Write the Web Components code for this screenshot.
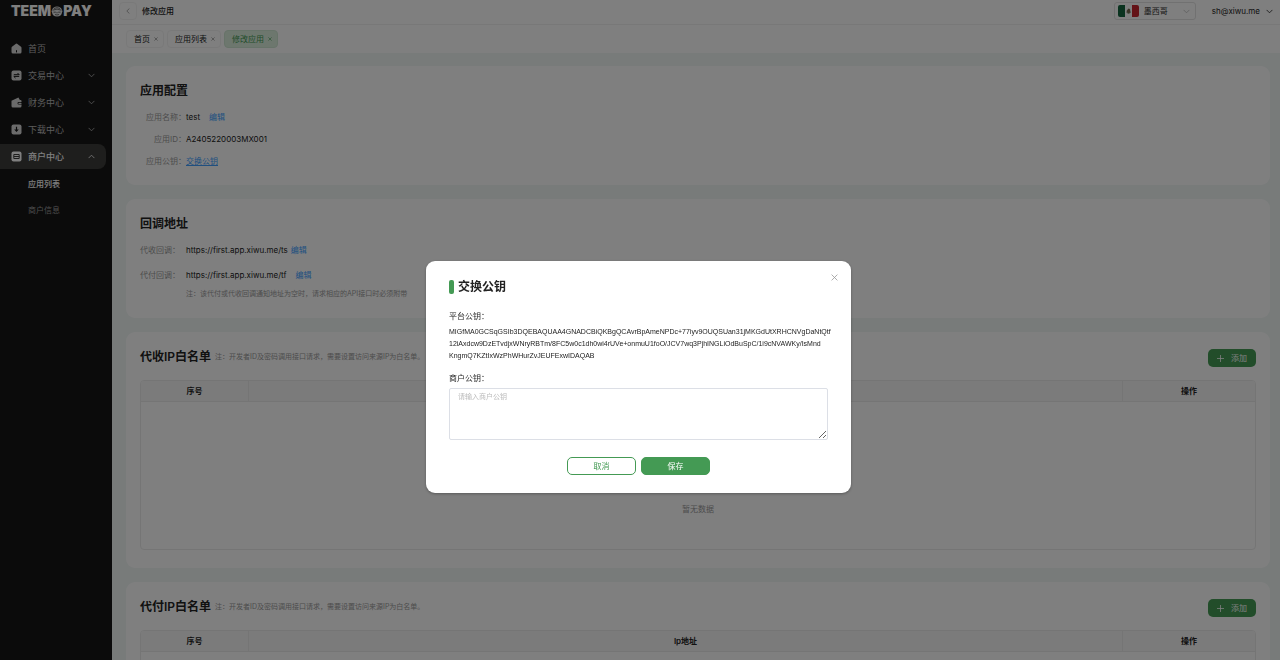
<!DOCTYPE html>
<html lang="zh-CN">
<head>
<meta charset="utf-8">
<meta name="viewport" content="width=device-width, initial-scale=1">
<title>修改应用</title>
<style>
  html, body { height: 100%; margin: 0; }
  body {
    --green: #449a54;
    --blue: #409eff;
    --muted: #999;
    --line: #ebebeb;
    overflow: hidden;
    font: 8px/12px Inter, "Noto Sans CJK SC", sans-serif;
    color: #222;
    background: #f0f6f4;
  }
</style>
</head>
<body>
<app-shell>
  <side-nav slot="side">
    <nav-item icon="home">首页</nav-item>
    <nav-item icon="trade" fold>交易中心</nav-item>
    <nav-item icon="wallet" fold>财务中心</nav-item>
    <nav-item icon="download" fold>下载中心</nav-item>
    <nav-item icon="shop" fold open>商户中心</nav-item>
    <nav-sub active>应用列表</nav-sub>
    <nav-sub>商户信息</nav-sub>
  </side-nav>
  <top-bar slot="top">修改应用</top-bar>
  <page-tabs slot="top">
    <page-tab>首页</page-tab>
    <page-tab>应用列表</page-tab>
    <page-tab active>修改应用</page-tab>
  </page-tabs>

  <content-card heading="应用配置">
    <info-row label="应用名称：" link="编辑" gap="wide">test</info-row>
    <info-row label="应用ID：">A2405220003MX001</info-row>
    <info-row label="应用公钥：" link="交换公钥" underline></info-row>
  </content-card>
  <content-card heading="回调地址" class="loose">
    <info-row start label="代收回调：" link="编辑">https://first.app.xiwu.me/ts</info-row>
    <info-row start label="代付回调：" link="编辑" gap="wide" note="注：该代付或代收回调通知地址为空时，请求相应的API接口时必须附带">https://first.app.xiwu.me/tf</info-row>
  </content-card>
  <content-card heading="代收IP白名单" note="注：开发者ID及密码调用接口请求，需要设置访问来源IP为白名单。" action="添加">
    <ip-table>暂无数据</ip-table>
  </content-card>
  <content-card heading="代付IP白名单" note="注：开发者ID及密码调用接口请求，需要设置访问来源IP为白名单。" action="添加">
    <ip-table></ip-table>
  </content-card>
</app-shell>
<key-dialog></key-dialog>

<script>
const define = (name, render) => customElements.define(name, class extends HTMLElement {
  connectedCallback() {
    if (this.shadowRoot) return;
    this.attachShadow({ mode: 'open' }).innerHTML = render(this);
  }
});
const chevron = (up) => `<svg width="7" height="5" viewBox="0 0 7 5" fill="none" stroke="currentColor" stroke-width=".8" aria-hidden="true"><path d="${up ? 'M.6 4.1 3.5 1.2 6.4 4.1' : 'M.6.9 3.5 3.8 6.4.9'}"/></svg>`;
const cross = '<svg width="4" height="4" viewBox="0 0 4 4" stroke="currentColor" stroke-width=".6" aria-hidden="true"><path d="M.4.4l3.2 3.2M3.6.4.4 3.6"/></svg>';

const icons = {
  home: '<path fill="currentColor" d="M5.5.5Q5.9.5 6.4.9L10 3.8Q10.5 4.2 10.5 5V9Q10.5 10.5 9 10.5H2Q.5 10.5.5 9V5Q.5 4.2 1 3.8L4.6.9Q5.1.5 5.5.5Z"/><path stroke="#171717" d="M5.5 7.2v2.2"/>',
  trade: '<rect fill="currentColor" x=".5" y=".5" width="10" height="10" rx="2"/><path stroke="#171717" fill="none" d="M2.8 4.7h5.4L6.5 3M8.2 6.4H2.8L4.5 8"/>',
  wallet: '<path fill="currentColor" d="M.5 3.8 7.4.6 8.9 3H9.5Q10.5 3 10.5 4v1H7.8Q6.5 5 6.5 6.3T7.8 7.6h2.7V9Q10.5 10.5 9 10.5H2Q.5 10.5.5 9Z"/><rect x="7.4" y="5.8" width="3.1" height="1.1" rx=".5" fill="currentColor"/>',
  download: '<rect fill="currentColor" x=".5" y=".5" width="10" height="10" rx="2"/><path fill="#171717" d="M4.9 2.8h1.2v2.6h1.7L5.5 8 3.2 5.4h1.7Z"/>',
  shop: '<rect fill="currentColor" x=".5" y=".5" width="10" height="10" rx="2"/><path stroke="#3c3c3a" fill="none" d="M2.8 3.5h5.4v4H2.8ZM2.800 5.500h5.400"/>'
};

define('app-shell', () => `
  <style>
    :host { display: grid; grid-template-columns: 112px minmax(0, 1fr); height: 100vh; }
    .page { display: flex; flex-direction: column; min-height: 0; }
    main { flex: 1; min-height: 0; overflow: auto; scrollbar-width: none; display: flex; flex-direction: column; gap: 14px; padding: 13px 10px 14px 14px; }
  </style>
  <slot name="side"></slot>
  <div class="page"><slot name="top"></slot><main><slot></slot></main></div>`);

define('side-nav', () => `
  <style>
    :host { display: block; background: #171717; color: #fff; }
    .logo { display: flex; align-items: center; height: 22px; padding-left: 11px; font: 900 14px/22px Inter, sans-serif; }
    nav { display: flex; flex-direction: column; gap: 2px; margin-top: 14px; }
  </style>
  <div class="logo"><span>TEEM</span><svg width="12" height="11" viewBox="0 0 12 11" aria-hidden="true">
    <path fill="#e4e4e4" d="M1 4Q2 .5 6 .5T11 4Q12 5 11 6.5 10.5 10.5 6 10.5T1 6.500Q0 5 1 4Z"/>
    <path fill="none" stroke="#333" stroke-width=".7" d="M1.500 4.200Q6 2 10.500 4.200M3 2.500Q6 .8 9 2.500M2.500 6.200h2.300M7.200 6.200h2.300M4 8.500Q6 9.500 8 8.500M6 6v1.300"/>
  </svg><span>PAY</span></div>
  <nav><slot></slot></nav>`);

define('nav-item', (el) => `
  <style>
    :host { display: block; margin-right: 6px; color: #b8b8b8; }
    :host([open]) { color: #fff; font-weight: 500; }
    button { display: flex; align-items: center; gap: 6px; width: 100%; height: 25px; margin: 0; padding: 0 11px; border: 0; border-radius: 0 8px 8px 0; background: none; color: inherit; font: inherit; font-size: 9px; text-align: left; }
    :host([open]) button { background: #3c3c3a; }
    .icon { color: #d6d6d6; }
    :host([open]) .icon { color: #fff; }
    .text { flex: 1; }
  </style>
  <button type="button"><svg class="icon" width="11" height="11" viewBox="0 0 11 11" aria-hidden="true">${icons[el.getAttribute('icon')]}</svg><span class="text"><slot></slot></span>${el.hasAttribute('fold') ? chevron(el.hasAttribute('open')) : ''}</button>`);

define('nav-sub', () => `
  <style>
    :host { display: block; }
    a { display: block; padding-left: 28px; line-height: 24px; color: #9a9a9a; text-decoration: none; }
    :host([active]) a { color: #fff; font-weight: 500; margin-top: 1px; }
  </style>
  <a href="#"><slot></slot></a>`);

define('top-bar', () => `
  <style>
    :host { display: flex; align-items: center; gap: 5px; height: 22px; padding: 0 7px 2px; background: #fff; border-bottom: 1px solid #f0f0f0; }
    button { font: inherit; color: inherit; background: none; margin: 0; padding: 0; border: 0; }
    .back { display: grid; place-items: center; width: 18px; height: 18px; border: 1px solid #f2f2f2; border-radius: 4px; color: #999; box-sizing: border-box; }
    h1 { flex: 1; margin: 0; font: inherit; font-weight: 500; }
    label { display: flex; align-items: center; gap: 5px; height: 18px; width: 82px; box-sizing: border-box; padding: 0 5px 0 3px; border: 1px solid #e2e2e2; border-radius: 3px; margin-right: 11px; color: #bbb; }
    select { appearance: none; flex: 1; min-width: 0; border: 0; padding: 0; background: none; font: inherit; color: #333; }
    .user { display: flex; align-items: center; gap: 6px; }
  </style>
  <button class="back" type="button" aria-label="返回"><svg width="4" height="6" viewBox="0 0 4 6" fill="none" stroke="currentColor" stroke-width=".8"><path d="M3.400.500.800 3l2.600 2.500"/></svg></button>
  <h1><slot></slot></h1>
  <label><svg width="21" height="12" viewBox="0 0 21 12" aria-hidden="true">
    <path fill="#fff" d="M0 0h21v12H0z"/><path fill="#14663f" d="M7 0H2Q0 0 0 2v8q0 2 2 2h5Z"/><path fill="#c8262f" d="M14 0h5q2 0 2 2v8q0 2-2 2h-5Z"/>
    <path fill="#75684e" d="M10 4Q11 3 12 4.500L12.500 7 11 8.500 9 7.500 8.500 6Z"/><path fill="none" stroke="#5e7e56" stroke-width=".7" d="M8.500 7.500Q10.500 9.500 12.800 7.200"/>
  </svg><select aria-label="国家"><option>墨西哥</option></select>${chevron()}</label>
  <button class="user" type="button">sh@xiwu.me ${chevron()}</button>`);

define('page-tabs', () => `
  <style>:host { display: flex; align-items: center; gap: 3px; height: 28px; padding: 0 14px; background: #fff; }</style>
  <slot></slot>`);

define('page-tab', () => `
  <style>
    :host { display: flex; align-items: center; gap: 4px; height: 16px; padding: 0 5px 0 7px; border: 1px solid #f2f2f2; border-radius: 4px; }
    :host([active]) { background: #daeedd; border-color: #cfe6d3; color: var(--green); }
    a { color: inherit; text-decoration: none; }
    button { display: flex; padding: 0; border: 0; margin: 0; background: none; color: #777; }
    :host([active]) button { color: inherit; }
  </style>
  <a href="#"><slot></slot></a><button type="button" aria-label="关闭">${cross}</button>`);

define('content-card', (el) => `
  <style>
    :host { display: block; flex: none; padding: 17px 14px 18px; border-radius: 9px; background: #fff; }
    header { display: flex; align-items: flex-start; margin-bottom: 12px; }
    h2 { margin: 0; font: inherit; font-size: 12px; line-height: 16px; font-weight: 600; }
    small { flex: 1; margin-left: 4px; font-size: 7px; line-height: 16px; color: var(--muted); }
    button { display: flex; align-items: center; gap: 7px; height: 18px; margin: 0 0 1px; padding: 0 9px; border: 0; border-radius: 5px; background: var(--green); color: #fff; font: inherit; }
    .body { display: flex; flex-direction: column; gap: 10px; }
    :host(.loose) .body { gap: 13px; }
  </style>
  <header><h2>${el.getAttribute('heading')}</h2>${el.hasAttribute('note') ? `<small>${el.getAttribute('note')}</small>` : ''}${el.hasAttribute('action') ? `<button type="button"><svg width="7" height="7" viewBox="0 0 7 7" stroke="currentColor" stroke-width=".8" aria-hidden="true"><path d="M3.500 0v7M0 3.500h7"/></svg>${el.getAttribute('action')}</button>` : ''}</header>
  <div class="body"><slot></slot></div>`);

define('info-row', (el) => `
  <style>
    :host { display: grid; grid-template-columns: 46px 1fr; }
    .label { text-align: right; color: var(--muted); }
    :host([start]) .label { text-align: left; }
    .value { display: flex; gap: 3px; }
    :host([gap="wide"]) .value { gap: 9px; }
    a { color: var(--blue); text-decoration: none; }
    :host([underline]) .value { gap: 0; }
    :host([underline]) a { text-decoration: underline; }
    small { grid-column: 2; margin-top: 7px; font-size: 7px; color: var(--muted); }
  </style>
  <span class="label">${el.getAttribute('label')}</span>
  <span class="value"><span><slot></slot></span>${el.hasAttribute('link') ? `<a href="#">${el.getAttribute('link')}</a>` : ''}</span>
  ${el.hasAttribute('note') ? `<small>${el.getAttribute('note')}</small>` : ''}`);

define('ip-table', () => `
  <style>
    :host { display: block; border: 1px solid var(--line); border-radius: 4px; overflow: hidden; }
    table { width: 100%; border-collapse: separate; border-spacing: 0; table-layout: fixed; }
    th { height: 20px; padding: 0; background: #f7f7f7; border-bottom: 1px solid var(--line); font-weight: 600; }
    th + th { border-left: 1px solid var(--line); }
    .index { width: 107px; }
    .ops { width: 132px; }
    td { padding: 30px 0 34px; text-align: center; color: var(--muted); }
    svg { display: block; margin: 0 auto 11px; }
  </style>
  <table>
    <thead><tr><th class="index">序号</th><th>Ip地址</th><th class="ops">操作</th></tr></thead>
    <tbody><tr><td colspan="3"><svg width="60" height="60" viewBox="0 0 60 60" fill="#f0f0f0" aria-hidden="true"><path d="M8 24 30 14l22 10v20L30 54 8 44Z"/><path fill="#ddd" d="m8 24 22 10 22-10v3L30 37 8 27Z"/></svg><slot></slot></td></tr></tbody>
  </table>`);

define('key-dialog', () => `
  <style>
    :host { position: fixed; inset: 0; display: flex; align-items: flex-start; justify-content: center; padding: 261px 3px 0 0; background: rgba(0, 0, 0, .5); }
    section { position: relative; box-sizing: border-box; width: 425px; max-width: 100%; padding: 18px 23px; border-radius: 9px; background: #fff; box-shadow: 0 1px 3px rgba(0, 0, 0, .3); }
    h2 { display: flex; align-items: center; gap: 4px; margin: 0 0 15px; font: inherit; font-size: 12px; line-height: 16px; font-weight: 600; }
    h2::before { content: ""; width: 5px; height: 14px; border-radius: 2px; background: var(--green); }
    .label { display: block; }
    .key { margin: 4px 0 10px; font: 7px/12px "Liberation Sans", sans-serif; white-space: nowrap; }
    textarea { display: block; box-sizing: border-box; width: 100%; height: 52px; margin: 4px 0 17px; padding: 2px 8px; border: 1px solid #dcdfe6; border-radius: 2px; font: inherit; font-size: 7px; resize: vertical; }
    textarea::placeholder { color: #bbb; }
    footer { display: flex; justify-content: center; gap: 5px; }
    footer button { width: 69px; height: 18px; box-sizing: border-box; margin: 0; padding: 0; border: 1px solid var(--green); border-radius: 5px; background: #fff; color: var(--green); font: inherit; }
    footer .save { background: var(--green); color: #fff; }
    .close { position: absolute; top: 13px; right: 13px; display: flex; padding: 0; border: 0; background: none; color: #999; }
  </style>
  <section role="dialog" aria-modal="true" aria-labelledby="t">
    <button class="close" type="button" aria-label="关闭"><svg width="7" height="7" viewBox="0 0 7 7" stroke="currentColor" stroke-width=".8"><path d="M.600.600l5.800 5.800M6.400.600.600 6.400"/></svg></button>
    <h2 id="t">交换公钥</h2>
    <span class="label">平台公钥：</span>
    <p class="key">MIGfMA0GCSqGSIb3DQEBAQUAA4GNADCBiQKBgQCAvrBpAmeNPDc+77iyv9OUQSUan31jMKGdUtXRHCNVgDaNtQtf<br>12iAxdcw9DzETvdjxWNryRBTm/8FC5w0c1dh0wi4rUVe+onmuU1foO/JCV7wq3PjhINGLiOdBuSpC/1i9cNVAWKy/IsMnd<br>KngmQ7KZtIxWzPhWHurZvJEUFExwIDAQAB</p>
    <label class="label" for="k">商户公钥：</label>
    <textarea id="k" placeholder="请输入商户公钥"></textarea>
    <footer><button type="button">取消</button><button class="save" type="button">保存</button></footer>
  </section>`);
</script>
</body>
</html>
